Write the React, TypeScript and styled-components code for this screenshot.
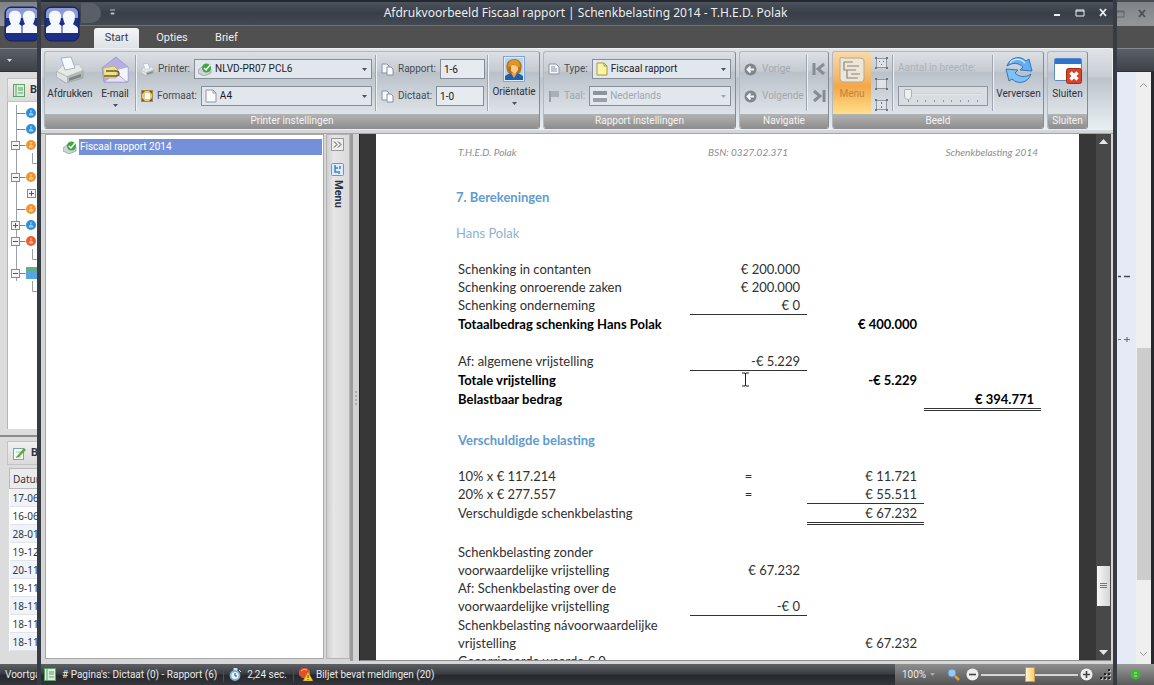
import React from "react";
import styled, { createGlobalStyle, css } from "styled-components";

const UI = 'Roboto, "Liberation Sans", sans-serif';
const TITLE = '"Noto Sans", "Open Sans", "Liberation Sans", sans-serif';
const DOC = 'Lato, "Open Sans", "Liberation Sans", sans-serif';

const GlobalStyle = createGlobalStyle`
  * { box-sizing: border-box; }
  body { margin: 0; background: #24272c; overflow: hidden; }
  button, input, select { font: inherit; color: inherit; margin: 0; }
  button { border: 0; background: none; padding: 0; }
`;

const Desktop = styled.div`
  display: grid;
  grid-template-columns: 37px minmax(0, 1fr) 37px;
  grid-template-rows: minmax(0, 1fr);
  height: 100vh;
  font: 11px/16px ${UI};
  color: #2f353d;
`;

/* ---------- shared chrome ---------- */

const darkBar = css`
  background: linear-gradient(#5d6065, #3b3e43 45%, #26282c 55%, #33363a);
`;

const Column = styled.aside`
  display: flex;
  flex-direction: column;
  min-width: 0;
  overflow: hidden;
  white-space: nowrap;
  background: #dcdcdc;
`;

const FadedTitle = styled.div`
  display: flex;
  align-items: flex-start;
  height: 26px;
  flex: none;
  border-top: 2px solid #4a4e54;
  background: linear-gradient(#7f8387, #94979a);
`;

const FadedBand = styled.div`
  height: 22px;
  flex: none;
  background: #505050;
`;

const FadedRibbon = styled.div`
  height: 24px;
  flex: none;
  padding: 2px 7px;
  border-top: 1px solid #85898f;
  border-bottom: 1px solid #2e3137;
  background: linear-gradient(#5b5f66, #3d4148);
  color: #d5d8dc;
`;

const ColumnStatus = styled.footer<{ $light?: boolean }>`
  display: flex;
  align-items: center;
  height: 21px;
  flex: none;
  padding-left: ${(p) => (p.$light ? "13px" : "5px")};
  color: #e9eaec;
  font-size: 10px;
  ${darkBar}
  ${(p) => p.$light && "background: linear-gradient(#9a9a9a, #5a5a5a);"}
`;

/* ---------- left column ---------- */

const LogoSlot = styled.div`
  height: 0;
  padding-left: 3px;
  position: relative;
  top: 3px;
`;

const PanelHead = styled.h2`
  display: flex;
  align-items: center;
  gap: 5px;
  height: 24px;
  flex: none;
  margin: 0 0 0 7px;
  padding-left: 5px;
  font-size: 11px;
  font-weight: 700;
  border: 1px solid #c4c4c4;
  border-right: 0;
  background: linear-gradient(#f1f1f1, #dadada);
`;

const DossierHead = styled(PanelHead)`
  margin-top: 6px;
`;

const TreePanel = styled.ul`
  flex: 1;
  min-height: 0;
  list-style: none;
  margin: 0 0 6px 7px;
  padding: 3px 0 0 4px;
  border-left: 1px solid #b5b5b5;
  background: #fff;
  overflow: hidden;
`;

const TreeRow = styled.li`
  display: flex;
  align-items: center;
  height: 16px;
  margin-left: -1px;
`;

const ColumnSplit = styled.div`
  height: 4px;
  margin-bottom: 2px;
  flex: none;
  border-top: 2px solid #8c8c8c;
`;

const DateTable = styled.table`
  margin: 3px 0 13px 9px;
  width: 60px;
  border-collapse: collapse;
  background: #fff;
  font: 10px/16px ${TITLE};
  th, td {
    height: 18px;
    padding: 0 0 0 3px;
    text-align: left;
    font-weight: 400;
    line-height: 16px;
    border-bottom: 1px solid #dfe3ea;
  }
  th { height: 20px; background: #ececec; border: 1px solid #b9b9b9; }
  tbody tr:nth-child(odd) { background: #f0f4fa; }
`;

/* ---------- right column ---------- */

const RightTitle = styled(FadedTitle)`
  padding: 4px 7px 0 0;
  gap: 12px;
  justify-content: flex-end;
`;

const RightBody = styled.div`
  flex: 1;
  min-height: 0;
  display: grid;
  grid-template-columns: 1fr 15px;
  border-right: 3px solid #26282c;
  background: #e4ebf7;
`;

const Marks = styled.div`
  padding: 196px 0 0 1px;
  display: flex;
  flex-direction: column;
  gap: 47px;
  color: #4c5664;
`;

const FadedScroll = styled.div`
  display: flex;
  flex-direction: column;
  align-items: center;
  padding: 10px 0 7px;
  background: #efefef;
`;

const FadedThumb = styled.div`
  width: 14px;
  height: 232px;
  margin: auto 0 71px;
  background: #cdcdcd;
`;

/* ---------- preview window ---------- */

const Window = styled.main`
  display: flex;
  flex-direction: column;
  min-width: 0;
  border: solid #363c45;
  border-width: 0 4px 0 4px;
  background: #d6d6d6;
`;

const TitleBar = styled.header`
  display: grid;
  grid-template-columns: 190px 1fr 170px;
  height: 26px;
  flex: none;
  padding: 3px 5px 0 2px;
  border-top: 2px solid #23272e;
  border-bottom: 1px solid #6d7279;
  background: linear-gradient(#4c525a, #393f48 50%, #444a52);
`;

const TitleLeft = styled.div`
  display: flex;
  align-items: flex-start;
  height: 20px;
`;

/* The application button hangs over the tab row. */
const AppButton = styled.button`
  position: relative;
  z-index: 1;
  line-height: 0;
`;

const QuickPlate = styled.div`
  width: 20px;
  height: 20px;
  margin: -2px 8px 0 0;
  border-radius: 0 10px 10px 0;
  background: #5a5f67;
`;

const TitleText = styled.h1`
  margin: 0;
  text-align: center;
  font: 400 12px/16px ${TITLE};
  color: #eceef0;
  white-space: nowrap;
`;

const WindowButtons = styled.div`
  display: flex;
  justify-content: flex-end;
  gap: 13px;
  button { height: 14px; line-height: 0; color: #eceef0; }
`;

const TabRow = styled.nav`
  display: flex;
  align-items: flex-end;
  height: 22px;
  flex: none;
  padding-left: 53px;
  background: #505050;
`;

const Tab = styled.button<{ $active?: boolean; $width: number }>`
  width: ${(p) => p.$width}px;
  height: 20px;
  border-radius: 3px 3px 0 0;
  color: ${(p) => (p.$active ? "#363b43" : "#eeeeee")};
  background: ${(p) => (p.$active ? "linear-gradient(#f4f5f7, #dfe2e6)" : "none")};
`;

const Ribbon = styled.div`
  display: flex;
  gap: 3px;
  height: 82px;
  flex: none;
  padding: 2px 2px 1px;
  border: 1px solid #eef0f2;
  border-bottom: 0;
  border-radius: 4px 4px 0 0;
  background: linear-gradient(#dfe3e7, #c9ced5 34%, #bcc3cb 36%, #e9f0f4);
`;

const Group = styled.section<{ $width: number }>`
  display: flex;
  flex-direction: column;
  width: ${(p) => p.$width}px;
  flex: none;
  border: 1px solid #b3b8bf;
  border-right-color: #868b93;
  border-bottom-color: #8b8f94;
  border-radius: 3px;
  background: linear-gradient(#dce0e4, #c6cbd2 25%, #bac1c9 27%, #d3d9df 65%, #e8eff3);
  overflow: hidden;
`;

const GroupBody = styled.div`
  display: flex;
  flex: 1;
  min-height: 0;
`;

const GroupName = styled.h2`
  flex: none;
  height: 14px;
  margin: 0;
  text-align: center;
  font-size: 10px;
  line-height: 14px;
  font-weight: 400;
  color: #f4f4f4;
  background: linear-gradient(#b3b3b3, #8f8f8f);
`;

const Separator = styled.div`
  width: 2px;
  flex: none;
  margin: 3px 0;
  border-left: 1px solid #9ea5ae;
  border-right: 1px solid #eef1f4;
`;

const BigButton = styled.button<{ $width: number; $on?: boolean }>`
  display: flex;
  flex-direction: column;
  align-items: center;
  gap: 3px;
  flex: none;
  width: ${(p) => p.$width}px;
  padding-top: 4px;
  font-size: 10px;
  line-height: 14px;
  white-space: nowrap;
  color: #2b323b;
  ${(p) =>
    p.$on &&
    css`
      color: #c0843c;
      border-radius: 2px;
      background: linear-gradient(#f8d9a8, #f5b96a 40%, #f3a748 55%, #ffe08c);
    `}
`;

const Fields = styled.div<{ $width: number }>`
  display: flex;
  flex-direction: column;
  gap: 7px;
  flex: none;
  width: ${(p) => p.$width}px;
  padding: 7px 3px 0 4px;
`;

const Field = styled.div<{ $off?: boolean }>`
  display: flex;
  align-items: center;
  gap: 4px;
  height: 20px;
  font-size: 10px;
  white-space: nowrap;
  color: ${(p) => (p.$off ? "#a0a6ae" : "#454b54")};
`;

const Combo = styled.div`
  display: flex;
  align-items: center;
  gap: 3px;
  flex: 1;
  min-width: 0;
  height: 20px;
  padding: 0 4px 0 3px;
  border: 1px solid #868e98;
  background: #e1e7ec;
  select {
    flex: 1;
    min-width: 0;
    appearance: none;
    border: 0;
    padding: 0;
    background: none;
    color: #1b2026;
    opacity: 1;
  }
  select:disabled { color: #a0a6ae; }
`;

const PageInput = styled.input<{ $width: number }>`
  width: ${(p) => p.$width}px;
  height: 20px;
  padding: 0 3px;
  border: 1px solid #868e98;
  background: #e6ebef;
  color: #1b2026;
`;

const NavButton = styled.button`
  display: flex;
  align-items: center;
  gap: 5px;
  height: 20px;
  font-size: 10px;
  color: #9ba1a9;
  &:disabled { color: #a3a9b1; }
`;

const ViewButtons = styled.div`
  display: flex;
  flex-direction: column;
  align-items: center;
  gap: 6px;
  width: 21px;
  padding-top: 3px;
  button { height: 15px; line-height: 0; }
`;

const SliderBlock = styled.label`
  display: flex;
  flex-direction: column;
  gap: 10px;
  width: 98px;
  padding: 8px 4px 0;
  font-size: 10px;
  line-height: 16px;
  color: #adb3ba;
  white-space: nowrap;
`;

const SliderBox = styled.div`
  display: flex;
  flex-direction: column;
  height: 20px;
  padding: 1px 5px;
  border: 1px solid #8f969f;
  background: #d8dde2;
  input {
    appearance: none;
    display: block;
    width: 100%;
    height: 12px;
    background: linear-gradient(#bfc5cb, #f1f3f5) center / 100% 2px no-repeat;
  }
  input::-webkit-slider-thumb {
    appearance: none;
    width: 8px;
    height: 11px;
    border: 1px solid #adb3ba;
    border-radius: 1px 1px 4px 4px;
    background: #edf0f2;
  }
`;

const Ticks = styled.div`
  display: flex;
  justify-content: space-between;
  padding: 0 4px;
  i { width: 1px; height: 2px; background: #8f969f; }
`;

/* ---------- workspace ---------- */

const Workspace = styled.div`
  display: grid;
  grid-template-columns: 281px 26px 9px minmax(0, 1fr);
  grid-template-rows: minmax(0, 1fr);
  flex: 1;
  min-height: 0;
  margin-top: 3px;
  padding: 0 2px 3px 2px;
  border-top: 1px solid #a4a4a4;
`;

const ReportList = styled.ul`
  list-style: none;
  margin: 0 0 2px 2px;
  padding: 3px 1px;
  border: 1px solid #a8a8a8;
  background: #fff;
`;

const ReportItem = styled.li`
  display: flex;
  align-items: center;
  gap: 2px;
  height: 17px;
  padding-left: 16px;
  font-size: 10px;
  button {
    flex: 1;
    height: 16px;
    padding-left: 1px;
    text-align: left;
    color: #fff;
    background: #7590da;
  }
`;

const SideStrip = styled.div`
  display: flex;
  flex-direction: column;
  align-items: center;
  gap: 12px;
  margin: 0 0 2px 2px;
  padding: 3px 1px 0 0;
  border: 1px solid #b4b4b4;
  background: linear-gradient(90deg, #cecece, #e6e6e6 30%, #dadada);
  button { line-height: 0; }
`;

const SideTab = styled.button`
  display: flex;
  flex-direction: column;
  align-items: center;
  gap: 4px;
  color: #2a333e;
  b { writing-mode: vertical-rl; line-height: 14px; font-size: 11px; }
`;

const Splitter = styled.div`
  display: grid;
  place-items: center;
  border-left: 3px solid #9b9b9b;
  background: #d2d2d2;
`;

const Preview = styled.div`
  display: grid;
  grid-template-columns: 16px minmax(0, 1fr) 17px 15px;
  grid-template-rows: minmax(0, 1fr);
  min-height: 0;
  border-left: 1px solid #222;
  border-bottom: 1px solid #8e8e8e;
  background: #373737;
`;

const Sheet = styled.article`
  grid-column: 2;
  min-height: 0;
  overflow: hidden;
  padding: 9px 38px 0 80px;
  background: #fff;
  font: 13px/18px ${DOC};
  color: #303030;
`;

const SheetHead = styled.header`
  display: grid;
  grid-template-columns: 1fr 1fr 1fr;
  margin-bottom: 27px;
  padding: 0 3px 0 2px;
  font-size: 10px;
  font-style: italic;
  color: #8c8c8c;
  span:nth-child(2) { text-align: center; }
  span:nth-child(3) { text-align: right; }
`;

const Heading = styled.h3<{ $sub?: boolean; $indent?: boolean }>`
  margin: 0 0 18px;
  padding-left: ${(p) => (p.$indent ? "2px" : "0")};
  font-size: 13px;
  line-height: 18px;
  font-weight: ${(p) => (p.$sub ? 400 : 700)};
  color: ${(p) => (p.$sub ? "#8fb0cd" : "#5f9bce")};
`;

const Sums = styled.table`
  width: 100%;
  table-layout: fixed;
  border-collapse: separate;
  border-spacing: 0;
  margin-bottom: 20px;
  td, th {
    height: 18px;
    padding: 0 7px 0 0;
    font-weight: 400;
    text-align: right;
    vertical-align: top;
    white-space: nowrap;
  }
  th { padding: 0 0 0 2px; text-align: left; }
`;

const SumRow = styled.tr<{ $bold?: boolean }>`
  && > * {
    ${(p) => p.$bold && "height: 19px; font-weight: 700; color: #000;"}
  }
`;

const Amount = styled.td<{ $rule?: "single" | "double" }>`
  ${(p) => p.$rule === "single" && "border-bottom: 1px solid #333;"}
  ${(p) => p.$rule === "double" && "border-bottom: 3px double #333;"}
`;

const Spacer = styled.tr`
  && > td { height: 18px; padding: 0; }
`;

const ScrollRail = styled.div`
  grid-column: 4;
  display: flex;
  flex-direction: column;
  align-items: center;
  background: #484848;
  padding: 3px 0 3px;
  button { line-height: 0; color: #e6e6e6; }
`;

const ScrollThumb = styled.div`
  display: grid;
  place-items: center;
  width: 13px;
  height: 40px;
  margin: auto 0 43px;
  background: linear-gradient(90deg, #f7f7f7, #d5d5d5);
`;

const StatusBar = styled.footer`
  display: flex;
  align-items: center;
  height: 21px;
  flex: none;
  padding-left: 3px;
  font-size: 10px;
  color: #e9eaec;
  white-space: nowrap;
  ${darkBar}
`;

const StatusItem = styled.span<{ $gap: number }>`
  display: flex;
  align-items: center;
  gap: ${(p) => p.$gap}px;
  padding-right: 6px;
  margin-right: 5px;
  border-right: 1px solid #4c4f54;
  line-height: 14px;
  &:last-of-type { border: 0; }
`;

const ZoomArea = styled.div`
  display: flex;
  align-items: center;
  gap: 2px;
  width: 218px;
  height: 21px;
  margin-left: auto;
  padding: 0 1px 0 7px;
  background: linear-gradient(#8f8f8f, #6f6f6f 50%, #555);
  button { line-height: 0; }
  input {
    appearance: none;
    flex: 1;
    min-width: 0;
    height: 16px;
    background: linear-gradient(#d5d5d5, #d5d5d5) center / 100% 2px no-repeat;
  }
  input::-webkit-slider-thumb {
    appearance: none;
    width: 10px;
    height: 15px;
    border: 1px solid #d39a45;
    background: linear-gradient(90deg, #fff3c9, #f9cf75);
  }
`;

const ZoomValue = styled.button`
  display: flex;
  align-items: center;
  gap: 4px;
  height: 16px;
  margin-right: 10px;
`;

const ZoomSlider = styled.div`
  display: flex;
  align-items: center;
  gap: 2px;
  flex: 1;
  min-width: 0;
  margin: 0 4px 0 4px;
`;

/* ---------- drawings ---------- */

const Svg = ({ w, h = w, children }: { w: number; h?: number; children?: React.ReactNode }) => (
  <DrawingBox width={w} height={h} viewBox={`0 0 ${w} ${h}`} aria-hidden="true">
    {children}
  </DrawingBox>
);

const DrawingBox = styled.svg`
  flex: none;
`;

const Logo = () => (
  <Svg w={38}>
    <rect x="2" y="2" width="34" height="34" rx="6" fill="#1c2f86" stroke="#15205a" />
    <path d="M3 13V8a5 5 0 0 1 5-5h22a5 5 0 0 1 5 5v5z" fill="#8c9bd6" />
    <g fill="#f6f8ff">
      <path d="M6 11c0-7 12-7 12 0 0 4-1 6-2 8l3 2v7H3v-4c0-3 3-3 5-5-1-2-2-4-2-8z" />
      <path d="M20 11c0-7 12-7 12 0 0 4-1 6-2 8 2 2 5 2 5 5v4H19v-7l3-2c-1-2-2-4-2-8z" />
    </g>
    <path d="M19 18v10" stroke="#1c2f86" />
  </Svg>
);

const Printer = ({ s = 28 }: { s?: number }) => (
  <DrawingBox width={s} height={s} viewBox="0 0 28 28" aria-hidden="true">
    <path d="M1 15l5-5 17-1 4 5v8l-17 5-9-6z" fill="#b3bbb8" stroke="#9098a0" strokeWidth=".6" />
    <path d="M1 15l5-5 17-1 4 5-16 6z" fill="#e6eae6" />
    <path d="M5 2l10-1 4 11-10 2z" fill="#f7fbff" stroke="#8fa3bb" strokeWidth=".8" />
    <path d="M1 16l10 5v6l-10-6z" fill="#dfe3e1" />
    <path d="M13 22l12-4v3l-12 4z" fill="#7d8785" />
  </DrawingBox>
);

const Mail = () => (
  <Svg w={28}>
    <path d="M1 12L15 1l12 10v15H3z" fill="#b6aee4" stroke="#a19bd0" />
    <path d="M14 14l13-3v14l-3 1z" fill="#f4f4fc" stroke="#a9a4d6" strokeWidth=".6" />
    <path d="M3 26l12-9 11 9z" fill="#e4e2f7" stroke="#a19bd0" strokeWidth=".7" />
    <path d="M2 12l11-2 4 4-2 8H3z" fill="#efe08d" stroke="#b5a55a" strokeWidth=".7" />
    <path d="M5 15h10c4 0 4 5 0 5H3" fill="none" stroke="#6b6126" strokeWidth="1.300" />
  </Svg>
);

const PrinterOk = () => (
  <Svg w={14}>
    <path d="M0 8l5-4 8 3v4l-7 3-6-3z" fill="#cfd4d8" stroke="#7e868e" strokeWidth=".6" />
    <circle cx="8.500" cy="6" r="4.500" fill="#3fa83f" />
    <path d="M6 6l2 2 4-5" fill="none" stroke="#fff" strokeWidth="1.500" />
  </Svg>
);

const Sheet1 = ({ fill = "#fbfcfe", stroke = "#8c97a6" }: { fill?: string; stroke?: string }) => (
  <Svg w={12} h={14}>
    <path d="M1 1h7l3 3v9H1z" fill={fill} stroke={stroke} />
    <path d="M8 1v3h3" fill="none" stroke={stroke} />
  </Svg>
);

const Format = () => (
  <Svg w={12}>
    <rect x=".5" y=".5" width="11" height="11" fill="#e6c878" stroke="#a88a48" />
    <path d="M4 3h4l1 1v5H4z" fill="#fff" />
    <path d="M1 1h3L1 4zM11 1v3L8 1zM1 11V8l3 3zM11 11H8l3-3z" fill="#6b5a34" />
  </Svg>
);

const Copies = () => (
  <Svg w={13}>
    <path d="M1 1h5l2 2v7H1z" fill="#f4f7fb" stroke="#8492a5" />
    <path d="M6 4h4l2 2v6H6z" fill="#fff" stroke="#8492a5" />
  </Svg>
);

const Portrait = () => (
  <Svg w={22} h={26}>
    <rect x=".5" y=".5" width="21" height="25" fill="#e2ecf8" stroke="#7fa6d9" />
    <rect x="2" y="2" width="18" height="22" fill="#b7d4f4" />
    <path d="M2 24v-4l5-3h8l5 3v4z" fill="#2360ab" />
    <path d="M5 17C1 8 5 3 11 3s10 5 6 14z" fill="#b87318" />
    <path d="M8 9h7v5l-3 4-4-3z" fill="#f8c988" />
    <path d="M5 11C5 5 9 3 13 4c3 1 4 4 4 7-3 0-5-1-7-3-1 2-3 3-5 3z" fill="#db962c" />
    <path d="M8 17l3 5 3-5z" fill="#f0a43d" />
  </Svg>
);

const TypeDoc = () => (
  <Svg w={12}>
    <path d="M1 1h7l3 3v7H1z" fill="#f4f6f9" stroke="#8b95a3" />
    <path d="M3 4h4M3 6h6M3 8h6" stroke="#8b95a3" />
  </Svg>
);

const Flag = () => (
  <Svg w={12}>
    <path d="M2 1v11" stroke="#9aa0a8" strokeWidth="2" />
    <path d="M3 1h8v6H3z" fill="#aab0b7" />
  </Svg>
);

const GreyFlag = () => (
  <Svg w={14} h={11}>
    <path d="M0 0h14v4H0z" fill="#8d949c" />
    <path d="M0 4h14v3H0z" fill="#eceff1" />
    <path d="M0 7h14v4H0z" fill="#989fa7" />
  </Svg>
);

const ArrowBall = () => (
  <Svg w={13}>
    <circle cx="6.500" cy="6.500" r="6" fill="#80868e" />
    <path d="M10 6.500H4M6.500 3.500l-3 3 3 3" fill="none" stroke="#f2f4f6" strokeWidth="1.800" />
  </Svg>
);

const Jump = ({ end }: { end?: boolean }) => (
  <Svg w={14}>
    <path
      d={end ? "M12 1v12M2 2l6 5-6 5" : "M2 1v12M12 2L6 7l6 5"}
      fill="none"
      stroke="#868d95"
      strokeWidth="3"
    />
  </Svg>
);

const MenuSheet = () => (
  <Svg w={26} h={28}>
    <path d="M1 2q2-1 4 0h16q4 0 4 3v18q0 3-3 3H5q-4 0-4-3z" fill="#ebe5da" stroke="#b9a98d" />
    <path d="M5 6h9M8 10h12M8 14h9M12 18h9M12 22h7M5 6v8h3M8 14v8h4" fill="none" stroke="#8b8575" strokeWidth="1.200" />
  </Svg>
);

const FrameIcon = ({ kind }: { kind: number }) => (
  <Svg w={13} h={14}>
    <rect x="1.500" y="2.500" width="10" height="9" fill="#dfe3e7" stroke="#9097a0" />
    <path d="M0 1h2v2H0zM11 1h2v2h-2zM0 11h2v2H0zM11 11h2v2h-2z" fill="#6d747d" />
    {kind === 0 && <path d="M4 5h1v1H4zM8 5h1v1H8zM6 8h1v1H6z" fill="#6d747d" />}
    {kind === 2 && <path d="M6 4h1v2H6zM6 8h1v2H6z" fill="#6d747d" />}
  </Svg>
);

const Refresh = () => (
  <Svg w={28}>
    <g stroke="#1f5fae" strokeWidth=".8" strokeLinejoin="round">
      <path d="M2 10C5 1 15-1 21 5l3-2 3 12-12-1 3-3C14 7 8 6 2 10z" fill="#62aef0" />
      <path d="M26 18c-3 9-13 11-19 5l-3 2-3-12 12 1-3 3c4 4 10 5 16 1z" fill="#7fc0f5" />
    </g>
    <path d="M5 7c4-5 11-5 15 0" fill="none" stroke="#c7e5fc" strokeWidth="1.500" />
  </Svg>
);

const CloseWin = () => (
  <Svg w={28}>
    <rect x=".5" y="2.500" width="27" height="22" rx="1" fill="#fdfeff" stroke="#5c88c4" />
    <path d="M1 3h26v5H1z" fill="#2d74cf" />
    <rect x="12.500" y="12.500" width="15" height="15" rx="2" fill="#d8442a" stroke="#a32c17" />
    <path d="M16.500 16.500l7 7M23.500 16.500l-7 7" stroke="#fff" strokeWidth="3.500" />
  </Svg>
);

const Caret = ({ color = "#4a515a" }: { color?: string }) => (
  <Svg w={5} h={3}>
    <path d="M0 0h5L2.500 3z" fill={color} />
  </Svg>
);

const GreenDoc = () => (
  <Svg w={12} h={13}>
    <rect x=".5" y=".5" width="11" height="12" fill="#d9efdb" stroke="#5fa36b" />
    <path d="M3 0v13" stroke="#5fa36b" />
    <path d="M5 4h5M5 6h5M5 9h5" stroke="#5fa36b" />
  </Svg>
);

const Note = () => (
  <Svg w={13}>
    <rect x=".5" y="1.500" width="10" height="11" fill="#f5faf5" stroke="#7aa3b5" />
    <path d="M3 5h5M3 10h5" stroke="#a9c3ce" />
    <path d="M4 9l7-8 2 2-7 7-3 1z" fill="#62a83c" />
  </Svg>
);

const Clock = () => (
  <Svg w={12} h={13}>
    <path d="M5 0h3v3H5zM10 2l2 2" stroke="#cfe0ea" fill="#cfe0ea" />
    <circle cx="6" cy="7.500" r="4.500" fill="#e7f3fa" stroke="#7eb4d0" strokeWidth="1.800" />
    <path d="M6 5v3h2" stroke="#2c5166" fill="none" />
  </Svg>
);

const Warn = () => (
  <Svg w={14} h={13}>
    <path d="M3 0h5l3 3v4L8 10H3L0 7V3z" fill="#e2502b" />
    <path d="M2 3q3-3 6-1" stroke="#f6a98a" fill="none" />
    <path d="M9 4l5 9H4z" fill="#f8cf3c" stroke="#b8861a" strokeWidth=".6" />
    <path d="M9 7v3M9 11v1" stroke="#5b430b" />
  </Svg>
);

const Lens = () => (
  <Svg w={13}>
    <path d="M7 7l5 5" stroke="#d9a23c" strokeWidth="2.500" />
    <circle cx="5" cy="5" r="4" fill="#9cc8ef" stroke="#5d8fc4" />
  </Svg>
);

const ZoomBtn = ({ plus }: { plus?: boolean }) => (
  <Svg w={13}>
    <circle cx="6.500" cy="6.500" r="6" fill="#eee" />
    <path d={plus ? "M3 6.500h7M6.500 3v7" : "M3 6.500h7"} stroke="#444" strokeWidth="1.600" />
  </Svg>
);

const Grip = () => (
  <Svg w={13}>
    <path d="M9 1h2v2H9zM5 5h2v2H5zM9 5h2v2H9zM1 9h2v2H1zM5 9h2v2H5zM9 9h2v2H9z" fill="#222" />
    <path d="M11 2h1v2h-2V3h1zM7 6h1v2H6V7h1zM11 6h1v2h-2V7h1zM3 10h1v2H2v-1h1zM7 10h1v2H6v-1h1zM11 10h1v2h-2v-1h1z" fill="#bbb" />
  </Svg>
);

const WinGlyph = ({ kind, color = "#eceef0" }: { kind: "min" | "max" | "close"; color?: string }) => (
  <Svg w={kind === "min" ? 9 : 10} h={14}>
    {kind === "min" && <path d="M1 9h6v2H1z" fill={color} />}
    {kind === "max" && <path d="M1 5h8v6H1zM1 6h8" fill="none" stroke={color} />}
    {kind === "close" && <path d="M2 4l6 7M8 4l-6 7" stroke={color} strokeWidth="1.800" />}
  </Svg>
);

const branch = "#98a0a8";

/* One line of the dossier tree: guide lines and a state marker. */
const Branch = ({ dot, corner, stop }: { dot?: string; corner?: boolean; stop?: boolean }) => (
  <Svg w={24} h={16}>
    {!stop && <path d="M1.500 0v16" stroke={branch} />}
    {dot && <path d="M1.500 8.500h9" stroke="#7c848c" />}
    {corner && <path d="M17.500 0v10.500H24" fill="none" stroke={branch} />}
    {dot && dot !== "cal" && (
      <>
        <circle cx="16" cy="8" r="5" fill={dot} />
        <path d="M16 5v2M14.500 10q0-2 1.500-2t1.500 2z" stroke="#ffffffb0" fill="none" />
      </>
    )}
    {dot === "cal" && (
      <>
        <rect x="11" y="2" width="13" height="12" fill="#58a7dc" />
        <path d="M11 2h13v4H11z" fill="#5fae8e" />
      </>
    )}
  </Svg>
);

const ExpandBox = styled.button<{ $indent?: boolean }>`
  width: 9px;
  height: 9px;
  flex: none;
  margin: 0 ${(p) => (p.$indent ? "0" : "-9px")} 0 ${(p) => (p.$indent ? "-12px" : "0")};
  line-height: 0;
  z-index: 1;
`;

const Expander = ({ plus, indent }: { plus?: boolean; indent?: boolean }) => (
  <ExpandBox $indent={indent} aria-label={plus ? "Uitklappen" : "Inklappen"}>
    <Svg w={9}>
      <rect x=".5" y=".5" width="8" height="8" fill="#f5f5f5" stroke="#8a8a8a" />
      <path d={plus ? "M2 4.500h5M4.500 2v5" : "M2 4.500h5"} stroke="#555" />
    </Svg>
  </ExpandBox>
);

const BranchSlot = styled.span`
  display: flex;
  margin-left: 4px;
`;

const BLUE = "#2e8fdc";
const ORANGE = "#f1952f";
const RED = "#ea5f2d";

const tree: { dot?: string; box?: "plus" | "minus"; corner?: boolean; inner?: boolean; stop?: boolean }[] = [
  { dot: BLUE },
  { dot: BLUE },
  { dot: ORANGE, box: "minus" },
  { corner: true },
  { dot: ORANGE, box: "minus" },
  { inner: true },
  { dot: ORANGE },
  { dot: BLUE, box: "plus" },
  { dot: RED, box: "minus" },
  { corner: true },
  { dot: "cal", box: "minus" },
  { corner: true, stop: true },
];

const dates = ["17-06", "16-06", "28-01", "19-12", "20-11", "19-11", "18-11", "18-11", "18-11"];

type Rule = "single" | "double";
type Line = { label: string; cells?: [string?, string?, string?]; rules?: [Rule?, Rule?, Rule?]; bold?: boolean } | null;

const gift: Line[] = [
  { label: "Schenking in contanten", cells: ["€ 200.000"] },
  { label: "Schenking onroerende zaken", cells: ["€ 200.000"] },
  { label: "Schenking onderneming", cells: ["€ 0"], rules: ["single"] },
  { label: "Totaalbedrag schenking Hans Polak", cells: [, "€ 400.000"], bold: true },
  null,
  { label: "Af: algemene vrijstelling", cells: ["-€ 5.229"], rules: ["single"] },
  { label: "Totale vrijstelling", cells: [, "-€ 5.229"], bold: true },
  { label: "Belastbaar bedrag", cells: [, , "€ 394.771"], rules: [, , "double"], bold: true },
];

const tax: Line[] = [
  { label: "10% x € 117.214", cells: ["=", "€ 11.721"] },
  { label: "20% x € 277.557", cells: ["=", "€ 55.511"], rules: [, "single"] },
  { label: "Verschuldigde schenkbelasting", cells: [, "€ 67.232"], rules: [, "double"] },
  null,
  { label: "Schenkbelasting zonder" },
  { label: "voorwaardelijke vrijstelling", cells: ["€ 67.232"] },
  { label: "Af: Schenkbelasting over de" },
  { label: "voorwaardelijke vrijstelling", cells: ["-€ 0"], rules: ["single"] },
  { label: "Schenkbelasting návoorwaardelijke" },
  { label: "vrijstelling", cells: [, "€ 67.232"] },
  { label: "Gecorrigeerde waarde € 0" },
];

const Equals = styled.td`
  && { padding: 0; text-align: center; }
`;

const SumTable = ({ lines }: { lines: Line[] }) => (
  <Sums>
    <colgroup>
      <col width="40%" />
      <col width="20%" />
      <col width="20%" />
      <col width="20%" />
    </colgroup>
    <tbody>
      {lines.map((line, i) =>
        line ? (
          <SumRow key={i} $bold={line.bold}>
            <th scope="row">{line.label}</th>
            {[0, 1, 2].map((c) =>
              line.cells?.[c] === "=" ? (
                <Equals key={c}>=</Equals>
              ) : (
                <Amount key={c} $rule={line.rules?.[c]}>
                  {line.cells?.[c]}
                </Amount>
              )
            )}
          </SumRow>
        ) : (
          <Spacer key={i}>
            <td colSpan={4} />
          </Spacer>
        )
      )}
    </tbody>
  </Sums>
);

const Pointer = styled.span`
  position: absolute;
  left: 286px;
  top: 112px;
  line-height: 0;
`;

const SumArea = styled.div`
  position: relative;
`;

export default function App() {
  return (
    <>
      <GlobalStyle />
      <Desktop>
        <Column>
          <FadedTitle>
            <LogoSlot>
              <Logo />
            </LogoSlot>
          </FadedTitle>
          <FadedBand />
          <FadedRibbon>
            <Caret color="#d5d8dc" />
          </FadedRibbon>
          <DossierHead>
            <GreenDoc />B
          </DossierHead>
          <TreePanel>
            {tree.map((n, i) => (
              <TreeRow key={i}>
                {n.box && <Expander plus={n.box === "plus"} />}
                <BranchSlot>
                  <Branch dot={n.dot} corner={n.corner} stop={n.stop} />
                </BranchSlot>
                {n.inner && <Expander plus indent />}
              </TreeRow>
            ))}
          </TreePanel>
          <ColumnSplit />
          <PanelHead>
            <Note />B
          </PanelHead>
          <DateTable>
            <thead>
              <tr>
                <th scope="col">Datum</th>
              </tr>
            </thead>
            <tbody>
              {dates.map((d, i) => (
                <tr key={i}>
                  <td>{d}</td>
                </tr>
              ))}
            </tbody>
          </DateTable>
          <ColumnStatus>Voortgang</ColumnStatus>
        </Column>

        <Window>
          <TitleBar>
            <TitleLeft>
              <AppButton aria-label="Toepassingsmenu">
                <Logo />
              </AppButton>
              <QuickPlate />
              <Svg w={7} h={14}>
                <path d="M1 5h5M2 8h3v1H2z" stroke="#b9bdc2" fill="#b9bdc2" />
              </Svg>
            </TitleLeft>
            <TitleText>Afdrukvoorbeeld Fiscaal rapport | Schenkbelasting 2014 - T.H.E.D. Polak</TitleText>
            <WindowButtons>
              <button aria-label="Minimaliseren"><WinGlyph kind="min" /></button>
              <button aria-label="Maximaliseren"><WinGlyph kind="max" /></button>
              <button aria-label="Venster sluiten"><WinGlyph kind="close" /></button>
            </WindowButtons>
          </TitleBar>
          <TabRow>
            <Tab $active $width={45}>Start</Tab>
            <Tab $width={66}>Opties</Tab>
            <Tab $width={43}>Brief</Tab>
          </TabRow>

          <Ribbon>
            <Group $width={496}>
              <GroupBody>
                <BigButton $width={50}>
                  <Printer />
                  Afdrukken
                </BigButton>
                <BigButton $width={40}>
                  <Mail />
                  E-mail
                  <Caret />
                </BigButton>
                <Separator />
                <Fields $width={238}>
                  <Field>
                    <Printer s={13} />
                    <label htmlFor="printer">Printer:</label>
                    <Combo>
                      <PrinterOk />
                      <select id="printer"><option>NLVD-PR07 PCL6</option></select>
                      <Caret />
                    </Combo>
                  </Field>
                  <Field>
                    <Format />
                    <label htmlFor="formaat">Formaat:</label>
                    <Combo>
                      <Sheet1 />
                      <select id="formaat"><option>A4</option></select>
                      <Caret />
                    </Combo>
                  </Field>
                </Fields>
                <Separator />
                <Fields $width={110}>
                  <Field>
                    <Copies />
                    <label htmlFor="rapport">Rapport:</label>
                    <PageInput id="rapport" $width={45} defaultValue="1-6" />
                  </Field>
                  <Field>
                    <Copies />
                    <label htmlFor="dictaat">Dictaat:</label>
                    <PageInput id="dictaat" $width={48} defaultValue="1-0" />
                  </Field>
                </Fields>
                <Separator />
                <BigButton $width={50}>
                  <Portrait />
                  Oriëntatie
                  <Caret />
                </BigButton>
              </GroupBody>
              <GroupName>Printer instellingen</GroupName>
            </Group>

            <Group $width={193}>
              <GroupBody>
                <Fields $width={190}>
                  <Field>
                    <TypeDoc />
                    <label htmlFor="type">Type:</label>
                    <Combo>
                      <Sheet1 fill="#fbf3a6" stroke="#a89a3c" />
                      <select id="type"><option>Fiscaal rapport</option></select>
                      <Caret />
                    </Combo>
                  </Field>
                  <Field $off>
                    <Flag />
                    <label htmlFor="taal">Taal:</label>
                    <Combo>
                      <GreyFlag />
                      <select id="taal" disabled><option>Nederlands</option></select>
                      <Caret color="#a0a6ae" />
                    </Combo>
                  </Field>
                </Fields>
              </GroupBody>
              <GroupName>Rapport instellingen</GroupName>
            </Group>

            <Group $width={90}>
              <GroupBody>
                <Fields $width={66}>
                  <NavButton disabled><ArrowBall />Vorige</NavButton>
                  <NavButton disabled><ArrowBall />Volgende</NavButton>
                </Fields>
                <Separator />
                <Fields $width={20}>
                  <NavButton disabled aria-label="Eerste"><Jump /></NavButton>
                  <NavButton disabled aria-label="Laatste"><Jump end /></NavButton>
                </Fields>
              </GroupBody>
              <GroupName>Navigatie</GroupName>
            </Group>

            <Group $width={212}>
              <GroupBody>
                <BigButton $width={38} $on>
                  <MenuSheet />
                  Menu
                </BigButton>
                <ViewButtons>
                  <button aria-label="Hele pagina"><FrameIcon kind={0} /></button>
                  <button aria-label="Paginabreedte"><FrameIcon kind={1} /></button>
                  <button aria-label="Paginahoogte"><FrameIcon kind={2} /></button>
                </ViewButtons>
                <Separator />
                <SliderBlock>
                  Aantal in breedte:
                  <SliderBox>
                    <input type="range" min={1} max={9} defaultValue={1} disabled />
                    <Ticks>
                      {Array.from({ length: 9 }, (_, i) => <i key={i} />)}
                    </Ticks>
                  </SliderBox>
                </SliderBlock>
                <Separator />
                <BigButton $width={49}>
                  <Refresh />
                  Verversen
                </BigButton>
              </GroupBody>
              <GroupName>Beeld</GroupName>
            </Group>

            <Group $width={41}>
              <GroupBody>
                <BigButton $width={39}>
                  <CloseWin />
                  Sluiten
                </BigButton>
              </GroupBody>
              <GroupName>Sluiten</GroupName>
            </Group>
          </Ribbon>

          <Workspace>
            <ReportList>
              <ReportItem>
                <PrinterOk />
                <button>Fiscaal rapport 2014</button>
              </ReportItem>
            </ReportList>
            <SideStrip>
              <button aria-label="Paneel uitklappen">
                <Svg w={13}>
                  <rect x=".5" y=".5" width="12" height="12" fill="#eee" stroke="#999" />
                  <path d="M3 3.500l3 3-3 3M7 3.500l3 3-3 3" fill="none" stroke="#444" />
                </Svg>
              </button>
              <SideTab>
                <Svg w={13}>
                  <rect x=".5" y=".5" width="12" height="12" rx="1" fill="#dcecfa" stroke="#5c9bd2" />
                  <path d="M4 2v7h3M4 5h3M9 3v3M8 8v3" fill="none" stroke="#3d83c0" strokeWidth="1.500" />
                </Svg>
                <b>Menu</b>
              </SideTab>
            </SideStrip>
            <Splitter>
              <Svg w={3} h={14}>
                <path d="M1 0v2M1 4v2M1 8v2M1 12v2" stroke="#8c8c8c" />
              </Svg>
            </Splitter>
            <Preview>
              <Sheet>
                <SheetHead>
                  <span>T.H.E.D. Polak</span>
                  <span>BSN: 0327.02.371</span>
                  <span>Schenkbelasting 2014</span>
                </SheetHead>
                <Heading>7. Berekeningen</Heading>
                <Heading $sub>Hans Polak</Heading>
                <SumArea>
                  <SumTable lines={gift} />
                  <Pointer>
                    <Svg w={7} h={15}>
                      <path d="M0 1h3l.500 1 .500-1h3M3.500 1v13M0 14h3l.500-1 .500 1h3" fill="none" stroke="#222" />
                    </Svg>
                  </Pointer>
                </SumArea>
                <Heading $indent>Verschuldigde belasting</Heading>
                <SumTable lines={tax} />
              </Sheet>
              <ScrollRail>
                <button aria-label="Omhoog">
                  <Svg w={9} h={8}><path d="M0 7h9L4.500 2z" fill="#e6e6e6" /></Svg>
                </button>
                <ScrollThumb>
                  <Svg w={7} h={6}><path d="M0 .500h7M0 2.500h7M0 4.500h7" stroke="#777" /></Svg>
                </ScrollThumb>
                <button aria-label="Omlaag">
                  <Svg w={9} h={8}><path d="M0 1h9L4.500 6z" fill="#e6e6e6" /></Svg>
                </button>
              </ScrollRail>
            </Preview>
          </Workspace>

          <StatusBar>
            <StatusItem $gap={6}><GreenDoc /># Pagina's: Dictaat (0) - Rapport (6)</StatusItem>
            <StatusItem $gap={6}><Clock />2,24 sec.</StatusItem>
            <StatusItem $gap={3}><Warn />Biljet bevat meldingen (20)</StatusItem>
            <ZoomArea>
              <ZoomValue>100%<Caret color="#aaa" /></ZoomValue>
              <Lens />
              <ZoomSlider>
                <button aria-label="Uitzoomen"><ZoomBtn /></button>
                <input type="range" min={0} max={100} defaultValue={50} aria-label="Zoomniveau" />
                <button aria-label="Inzoomen"><ZoomBtn plus /></button>
              </ZoomSlider>
              <Grip />
            </ZoomArea>
          </StatusBar>
        </Window>

        <Column>
          <RightTitle>
            <WinGlyph kind="max" color="#5e6268" />
            <WinGlyph kind="close" color="#4a4e55" />
          </RightTitle>
          <FadedBand />
          <FadedRibbon />
          <RightBody>
            <Marks>
              <Svg w={14} h={16}><path d="M0 8.500h3M6 8.500h6" stroke="#3f4853" strokeWidth="1.500" /></Svg>
              <Svg w={14} h={16}><path d="M0 8.500h3M6 8.500h6M9 6v5" stroke="#6a7480" strokeWidth="1.200" /></Svg>
            </Marks>
            <FadedScroll>
              <Svg w={9} h={6}><path d="M1 5l3.500-3.500L8 5" fill="none" stroke="#9a9a9a" /></Svg>
              <FadedThumb />
              <Svg w={9} h={6}><path d="M1 1l3.500 3.500L8 1" fill="none" stroke="#9a9a9a" /></Svg>
            </FadedScroll>
          </RightBody>
          <ColumnStatus $light>
            <Svg w={11}><circle cx="5.500" cy="5.500" r="5" fill="#3cb92e" /><path d="M4 4h3M4 7h3" stroke="#baf0ae" /></Svg>
          </ColumnStatus>
        </Column>
      </Desktop>
    </>
  );
}
